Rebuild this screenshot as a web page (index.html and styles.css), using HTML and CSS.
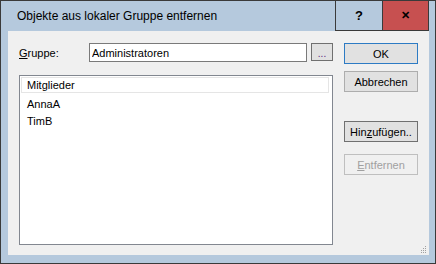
FILE: index.html
```html
<!DOCTYPE html>
<html lang="de">
<head>
    <meta charset="UTF-8">
    <meta name="viewport" content="width=device-width, initial-scale=1.0">
    <title>Objekte aus lokaler Gruppe entfernen</title>
    <link rel="stylesheet" href="styles.css">
</head>
<body>
    <div class="window">
        <div class="titlebar">
            <span class="title">Objekte aus lokaler Gruppe entfernen</span>
            <button class="caption-btn help">?</button>
            <button class="caption-btn close">&#x2715;</button>
        </div>
        <div class="frame">
            <div class="content">
                <div class="left-col">
                    <div class="group-row">
                        <label for="group" class="group-label"><u>G</u>ruppe:</label>
                        <input type="text" id="group" class="group-input" value="Administratoren">
                        <button class="browse-btn">...</button>
                    </div>
                    <div class="members">
                        <div class="members-header">Mitglieder</div>
                        <div class="member">AnnaA</div>
                        <div class="member">TimB</div>
                    </div>
                </div>
                <div class="right-col">
                    <button class="btn default">OK</button>
                    <button class="btn">Abbrechen</button>
                    <button class="btn add">Hin<u>z</u>ufügen..</button>
                    <button class="btn" disabled><u>E</u>ntfernen</button>
                </div>
                <div class="grip">
                    <svg width="7" height="7" viewBox="0 0 7 7">
                        <rect x="5" y="0" width="1" height="1" fill="#a0a0a0"/>
                        <rect x="3" y="2" width="1" height="1" fill="#a0a0a0"/>
                        <rect x="5" y="2" width="1" height="1" fill="#a0a0a0"/>
                        <rect x="1" y="4" width="1" height="1" fill="#a0a0a0"/>
                        <rect x="3" y="4" width="1" height="1" fill="#a0a0a0"/>
                        <rect x="5" y="4" width="1" height="1" fill="#a0a0a0"/>
                        <rect x="1" y="6" width="1" height="1" fill="#a0a0a0"/>
                        <rect x="3" y="6" width="1" height="1" fill="#a0a0a0"/>
                        <rect x="5" y="6" width="1" height="1" fill="#a0a0a0"/>
                    </svg>
                </div>
            </div>
        </div>
    </div>
</body>
</html>
```

FILE: styles.css
```css
body {
    margin: 0;
    padding: 0;
    font-family: "Liberation Sans", Arial, sans-serif;
    font-size: 11px;
    color: #000;
}

.window {
    width: 436px;
    height: 264px;
    box-sizing: border-box;
    border: 1px solid #3a3a3a;
    background-color: #b5c9dd;
    display: flex;
    flex-direction: column;
}

.titlebar {
    height: 30px;
    display: flex;
    align-items: stretch;
    padding-right: 6px;
}

.title {
    flex: 1;
    font-size: 12px;
    padding-left: 16px;
    line-height: 30px;
}

.caption-btn {
    width: 47px;
    margin: 0;
    padding: 0;
    border: none;
    border-left: 1px solid #3a3a3a;
    border-bottom: 1px solid #3a3a3a;
    background-color: #b5c9dd;
    font-family: "Liberation Sans", Arial, sans-serif;
    font-weight: bold;
    color: #000;
}

.help {
    font-size: 13px;
}

.close {
    background-color: #c75050;
    font-size: 11px;
    border-right: 1px solid #3a3a3a;
}

.frame {
    flex: 1;
    padding: 0 6px 8px 7px;
    display: flex;
}

.content {
    flex: 1;
    position: relative;
    background-color: #f0f0f0;
    display: flex;
    gap: 11px;
    padding: 12px 0 0 11px;
}

.left-col {
    width: 314px;
    display: flex;
    flex-direction: column;
    gap: 12px;
}

.group-row {
    display: flex;
    align-items: flex-start;
    height: 20px;
}

.group-label {
    width: 70px;
    line-height: 20px;
}

.group-input {
    width: 218px;
    height: 19px;
    box-sizing: border-box;
    margin: 0;
    padding: 0 2px;
    border: 1px solid #7a7a7a;
    background: #fff;
    font-family: "Liberation Sans", Arial, sans-serif;
    font-size: 11px;
    color: #000;
}

.browse-btn {
    width: 22px;
    height: 18px;
    margin: 0 0 0 4px;
    padding: 4px 0 0;
    box-sizing: border-box;
    border: 1px solid #707070;
    background-color: #e1e1e1;
    font-family: "Liberation Sans", Arial, sans-serif;
    font-size: 10px;
    line-height: 10px;
    color: #5a2a7a;
}

.members {
    height: 170px;
    box-sizing: border-box;
    border: 1px solid #828790;
    background-color: #fff;
    padding: 1px 3px 0 1px;
}

.members-header {
    height: 16px;
    box-sizing: border-box;
    border: 1px solid #e5e5e5;
    padding-left: 5px;
    line-height: 14px;
}

.member {
    padding-left: 6px;
    line-height: 17px;
}

.members-header + .member {
    margin-top: 3px;
}

.right-col {
    width: 74px;
    display: flex;
    flex-direction: column;
}

.btn {
    height: 21px;
    margin: 0 0 7px;
    padding: 0;
    box-sizing: border-box;
    border: 1px solid #adadad;
    background-color: #e1e1e1;
    font-family: "Liberation Sans", Arial, sans-serif;
    font-size: 11px;
    color: #000;
}

.btn.default {
    border-color: #2d7bc4;
}

.btn.add {
    margin-top: 22px;
    margin-bottom: 12px;
    border-color: #707070;
}

.btn:disabled {
    background-color: #f0f0f0;
    border-color: #bfbfbf;
    color: #a0a0a0;
}

.grip {
    position: absolute;
    right: 2px;
    bottom: 2px;
    width: 7px;
    height: 7px;
    line-height: 0;
}
```
